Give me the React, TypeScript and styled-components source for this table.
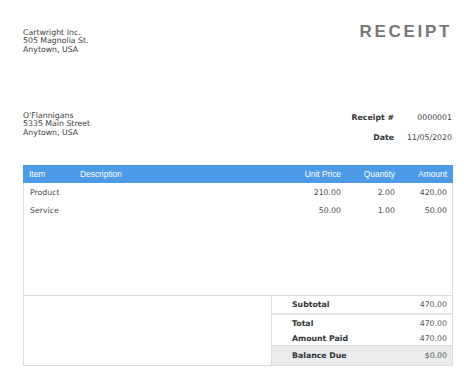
import styled, { createGlobalStyle } from 'styled-components';

const GlobalStyle = createGlobalStyle`
    html, body {
        margin: 0;
        padding: 0;
        background: #ffffff;
    }
    body {
        font-family: "DejaVu Sans", Verdana, sans-serif;
        color: #3a3a3a;
    }
`;

const Page = styled.div`
    width: 474px;
    height: 390px;
    box-sizing: border-box;
    padding: 22px 21px 0 23px;
    display: flex;
    flex-direction: column;
`;

const TopRow = styled.div`
    height: 33px;
    display: flex;
    justify-content: space-between;
    align-items: flex-start;
`;

const Address = styled.div<{ $offset?: number }>`
    margin-top: ${(p) => p.$offset ?? 0}px;
    font-size: 7.8px;
    line-height: 8.4px;
    color: #3c3c3c;
`;

const Title = styled.h1`
    margin: 0;
    font-family: "Liberation Sans", Arial, sans-serif;
    font-size: 17px;
    line-height: 20px;
    font-weight: 700;
    letter-spacing: 2.7px;
    color: #777777;
    margin-right: 1px;
`;

const BillRow = styled.div`
    margin-top: 52px;
    height: 40px;
    display: flex;
    justify-content: space-between;
    align-items: flex-start;
`;

const Meta = styled.div`
    display: grid;
    grid-template-columns: auto 58px;
    grid-auto-rows: 20px;
    align-items: center;
    font-size: 7.8px;
    margin-right: 1px;
`;

const MetaLabel = styled.div`
    font-weight: 700;
    text-align: right;
    color: #333333;
`;

const MetaValue = styled.div`
    text-align: right;
    color: #444444;
`;

const Table = styled.div`
    margin-top: 18px;
    border: 1px solid #dcdcdc;
    border-top: none;
    display: flex;
    flex-direction: column;
`;

const columns = '51px 1fr 70px 54px 52px';

const HeadRow = styled.div`
    display: grid;
    grid-template-columns: ${columns};
    height: 18px;
    align-items: center;
    background: #4d9be6;
    margin: 0 -1px;
    font-family: "Liberation Sans", Arial, sans-serif;
    font-size: 8.4px;
    color: #ffffff;
`;

const Cell = styled.div<{ $right?: boolean }>`
    padding: 0 6px;
    text-align: ${(p) => (p.$right ? 'right' : 'left')};
    white-space: nowrap;
`;

const Body = styled.div`
    height: 113px;
    padding-top: 1px;
    box-sizing: border-box;
    border-bottom: 1px solid #dcdcdc;
`;

const LineRow = styled.div`
    display: grid;
    grid-template-columns: ${columns};
    height: 17.5px;
    align-items: center;
    font-size: 7.8px;
    color: #4a4a4a;
    margin-right: -1px;
`;

const Totals = styled.div`
    display: grid;
    grid-template-columns: 1fr 181px;
`;

const TotalsBox = styled.div`
    border-left: 1px solid #dcdcdc;
    display: flex;
    flex-direction: column;
`;

const TotalRow = styled.div<{ $h: number; $shade?: boolean; $line?: string }>`
    height: ${(p) => p.$h}px;
    display: flex;
    justify-content: space-between;
    align-items: center;
    padding: 0 5px 0 20px;
    font-size: 7.8px;
    background: ${(p) => (p.$shade ? '#eaeced' : 'transparent')};
    border-bottom: ${(p) => p.$line ?? 'none'};
`;

const TotalLabel = styled.span`
    font-weight: 700;
    color: #333333;
`;

const TotalValue = styled.span`
    color: #555555;
`;

const items = [
    { item: 'Product', desc: '', price: '210.00', qty: '2.00', amount: '420.00' },
    { item: 'Service', desc: '', price: '50.00', qty: '1.00', amount: '50.00' },
];

function App() {
    return (
        <>
            <GlobalStyle />
            <Page>
                <TopRow>
                    <Address $offset={7}>
                        Cartwright Inc.<br />
                        505 Magnolia St.<br />
                        Anytown, USA
                    </Address>
                    <Title>RECEIPT</Title>
                </TopRow>

                <BillRow>
                    <Address $offset={5}>
                        O'Flannigans<br />
                        5335 Main Street<br />
                        Anytown, USA
                    </Address>
                    <Meta>
                        <MetaLabel>Receipt #</MetaLabel>
                        <MetaValue>0000001</MetaValue>
                        <MetaLabel>Date</MetaLabel>
                        <MetaValue>11/05/2020</MetaValue>
                    </Meta>
                </BillRow>

                <Table>
                    <HeadRow>
                        <Cell>Item</Cell>
                        <Cell>Description</Cell>
                        <Cell $right>Unit Price</Cell>
                        <Cell $right>Quantity</Cell>
                        <Cell $right>Amount</Cell>
                    </HeadRow>
                    <Body>
                        {items.map((row) => (
                            <LineRow key={row.item}>
                                <Cell>{row.item}</Cell>
                                <Cell>{row.desc}</Cell>
                                <Cell $right>{row.price}</Cell>
                                <Cell $right>{row.qty}</Cell>
                                <Cell $right>{row.amount}</Cell>
                            </LineRow>
                        ))}
                    </Body>
                    <Totals>
                        <div />
                        <TotalsBox>
                            <TotalRow $h={17} $line="2px solid #e4e4e4">
                                <TotalLabel>Subtotal</TotalLabel>
                                <TotalValue>470.00</TotalValue>
                            </TotalRow>
                            <TotalRow $h={16}>
                                <TotalLabel>Total</TotalLabel>
                                <TotalValue>470.00</TotalValue>
                            </TotalRow>
                            <TotalRow $h={14} $line="1px solid #dcdcdc">
                                <TotalLabel>Amount Paid</TotalLabel>
                                <TotalValue>470.00</TotalValue>
                            </TotalRow>
                            <TotalRow $h={19} $shade>
                                <TotalLabel>Balance Due</TotalLabel>
                                <TotalValue>$0.00</TotalValue>
                            </TotalRow>
                        </TotalsBox>
                    </Totals>
                </Table>
            </Page>
        </>
    );
}

export default App;
